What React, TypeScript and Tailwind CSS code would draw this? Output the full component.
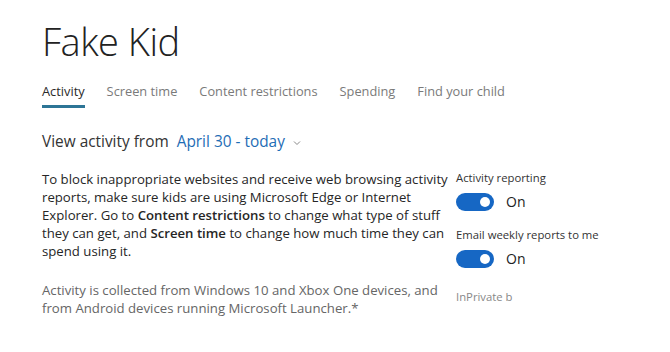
import React from "react";

function Toggle() {
  return (
    <div className="flex items-center gap-[12px]">
      <div className="relative h-[18px] w-[38px] rounded-full bg-[#1667c4]">
        <div className="absolute right-[4px] top-[4px] h-[10px] w-[10px] rounded-full bg-white" />
      </div>
      <span className="text-[14px] leading-none text-[#222]">On</span>
    </div>
  );
}

export default function App() {
  const tabs = ["Activity", "Screen time", "Content restrictions", "Spending", "Find your child"];
  return (
    <div
      className="h-[352px] w-[670px] overflow-hidden bg-white text-[#333]"
      style={{ fontFamily: '"Open Sans", "Noto Sans", sans-serif' }}
    >
      <div className="pl-[42px] pt-[17px]">
        <h1 className="text-[38px] font-light leading-[48px] tracking-[-0.5px] text-[#222]">Fake Kid</h1>
        <div className="mt-[17px] flex gap-[22px] text-[12.8px]">
          {tabs.map((t, i) => (
            <div key={t} className="flex flex-col">
              <span className={i === 0 ? "leading-[18px] text-[#2a2a2a]" : "leading-[18px] text-[#7a7a7a]"}>{t}</span>
              <div className={i === 0 ? "mt-[5px] h-[3px] bg-[#2d7596]" : "mt-[5px] h-[3px]"} />
            </div>
          ))}
        </div>
        <div className="mt-[23px] flex items-center text-[15.4px] leading-[22px]">
          <span className="text-[#333]">View activity from</span>
          <span className="ml-[8px] text-[#1f6db5]">April 30 - today</span>
          <svg className="ml-[8px] mt-[2px]" width="8" height="6" viewBox="0 0 8 6">
            <path d="M1 1.5 L4 4.5 L7 1.5" fill="none" stroke="#888" strokeWidth="1" />
          </svg>
        </div>
        <div className="mt-[17px] flex">
          <div className="w-[410px]">
            <p className="whitespace-nowrap text-[13.2px] leading-[18px] text-[#262626]">
              To block inappropriate websites and receive web browsing activity
              <br />
              reports, make sure kids are using Microsoft Edge or Internet
              <br />
              Explorer. Go to <span className="font-semibold">Content restrictions</span> to change what type of stuff
              <br />
              they can get, and <span className="font-semibold">Screen time</span> to change how much time they can
              <br />
              spend using it.
            </p>
            <p className="mt-[21px] whitespace-nowrap text-[13.2px] leading-[18px] text-[#666]">
              Activity is collected from Windows 10 and Xbox One devices, and
              <br />
              from Android devices running Microsoft Launcher.*
            </p>
          </div>
          <div className="ml-[4px] flex flex-col">
            <span className="text-[11.3px] leading-[16px] text-[#333]">Activity reporting</span>
            <div className="mt-[7px]">
              <Toggle />
            </div>
            <span className="mt-[16px] text-[11.3px] leading-[16px] text-[#333]">Email weekly reports to me</span>
            <div className="mt-[7px]">
              <Toggle />
            </div>
            <span className="mt-[21px] text-[11.3px] leading-[16px] text-[#888]">InPrivate b</span>
          </div>
        </div>
      </div>
    </div>
  );
}
